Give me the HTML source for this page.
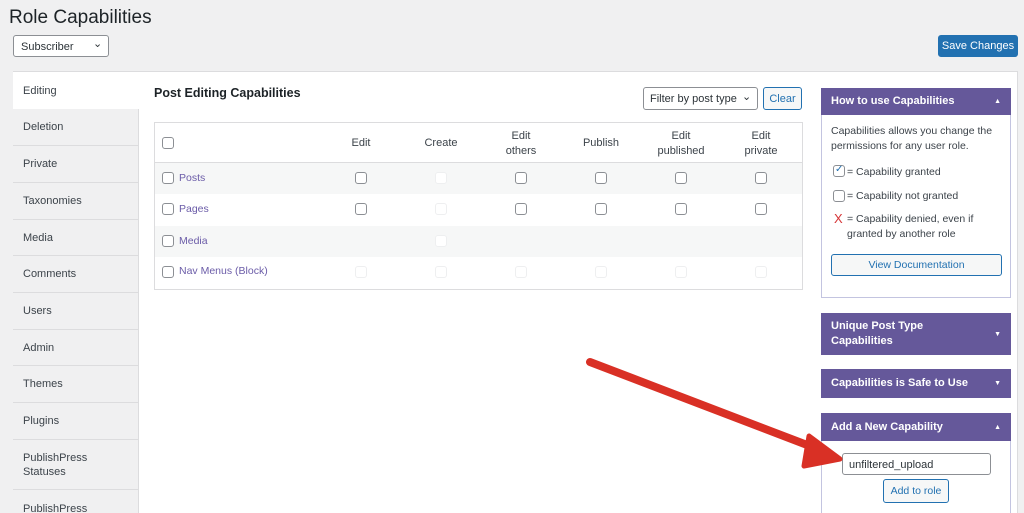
<!DOCTYPE html>
<html><head><meta charset="utf-8"><style>
*{box-sizing:border-box;margin:0;padding:0}
html,body{width:1024px;height:513px;overflow:hidden}
body{background:#f0f0f1;font-family:"Liberation Sans",sans-serif;font-size:11px;color:#3c434a;position:relative}
.a{position:absolute}
.cb{position:absolute;width:12px;height:12px;border:1px solid #8c8f94;border-radius:3px;background:#fff}
.cb.f{border-color:#eeeff0}
.tab{position:absolute;left:13px;width:126px;background:#f0f0f1;border-bottom:1px solid #dcdcde;border-right:1px solid #dcdcde;padding-left:10px;display:flex;align-items:center;font-size:11px;color:#3c434a;line-height:14px}
.th{position:absolute;text-align:center;width:80px;font-size:11px;line-height:15px;color:#3c434a}
.lnk{position:absolute;left:179px;color:#6b5ca8;font-size:10.5px}
.hd{position:absolute;left:821px;width:190px;background:#65589a;color:#fff;font-weight:bold;font-size:11px;padding-left:10px;display:flex;align-items:center;line-height:15px}
.tri{position:absolute;right:10px;font-size:7px}
</style></head><body>
<div class="a" style="left:9px;top:7px;font-size:19px;color:#1d2327">Role Capabilities</div>
<div class="a" style="left:13px;top:35px;width:96px;height:22px;border:1px solid #8c8f94;border-radius:3px;background:#fff;padding:5px 0 0 7px;font-size:11px;color:#2c3338">Subscriber<span class="a" style="left:79px;top:1px;font-size:11px">&#8964;</span></div>
<div class="a" style="left:938px;top:35px;width:80px;height:22px;background:#2271b1;border-radius:3px;color:#fff;font-size:11px;text-align:center;line-height:22px">Save Changes</div>

<div class="a" style="left:13px;top:71px;width:1005px;height:460px;background:#fff;border:1px solid #dcdcde"></div>
<div class="a" style="left:138px;top:108px;width:1px;height:420px;background:#dcdcde"></div>
<div class="tab" style="top:72px;height:37px;background:#fff;border-right:none;border-bottom:none">Editing</div>
<div class="tab" style="top:109px;height:37px">Deletion</div>
<div class="tab" style="top:146px;height:37px">Private</div>
<div class="tab" style="top:183px;height:37px">Taxonomies</div>
<div class="tab" style="top:220px;height:36px">Media</div>
<div class="tab" style="top:256px;height:37px">Comments</div>
<div class="tab" style="top:293px;height:37px">Users</div>
<div class="tab" style="top:330px;height:36px">Admin</div>
<div class="tab" style="top:366px;height:37px">Themes</div>
<div class="tab" style="top:403px;height:37px">Plugins</div>
<div class="tab" style="top:440px;height:50px">PublishPress<br>Statuses</div>
<div class="tab" style="top:490px;height:40px;align-items:flex-start;padding-top:12px">PublishPress</div>

<div class="a" style="left:154px;top:86px;font-size:12.5px;font-weight:bold;color:#1d2327">Post Editing Capabilities</div>
<div class="a" style="left:643px;top:87px;width:115px;height:23px;border:1px solid #8c8f94;border-radius:3px;padding:5px 0 0 6px;font-size:11px;color:#2c3338">Filter by post type<span class="a" style="left:98px;top:2px;font-size:11px">&#8964;</span></div>
<div class="a" style="left:763px;top:87px;width:39px;height:23px;border:1px solid #2271b1;border-radius:3px;background:#f6f7f7;color:#2271b1;font-size:11px;text-align:center;padding-top:5px">Clear</div>

<div class="a" style="left:154px;top:122px;width:649px;height:168px;border:1px solid #dcdcde"></div>
<div class="a" style="left:155px;top:162px;width:647px;height:1px;background:#dcdcde"></div>
<div class="a" style="left:155px;top:163px;width:647px;height:31px;background:#f6f7f7"></div>
<div class="a" style="left:155px;top:226px;width:647px;height:31px;background:#f6f7f7"></div>
<div class="th" style="left:321px;top:136px">Edit</div>
<div class="th" style="left:401px;top:136px">Create</div>
<div class="th" style="left:481px;top:129px">Edit<br>others</div>
<div class="th" style="left:561px;top:136px">Publish</div>
<div class="th" style="left:641px;top:129px">Edit<br>published</div>
<div class="th" style="left:721px;top:129px">Edit<br>private</div>
<div class="cb" style="left:162px;top:137px"></div>
<div class="cb" style="left:162px;top:172px"></div><div class="lnk" style="top:172px">Posts</div>
<div class="cb" style="left:162px;top:203px"></div><div class="lnk" style="top:203px">Pages</div>
<div class="cb" style="left:162px;top:235px"></div><div class="lnk" style="top:235px">Media</div>
<div class="cb" style="left:162px;top:266px"></div><div class="lnk" style="top:265px">Nav Menus (Block)</div>
<div class="cb" style="left:355px;top:172px"></div><div class="cb f" style="left:435px;top:172px"></div><div class="cb" style="left:515px;top:172px"></div><div class="cb" style="left:595px;top:172px"></div><div class="cb" style="left:675px;top:172px"></div><div class="cb" style="left:755px;top:172px"></div>
<div class="cb" style="left:355px;top:203px"></div><div class="cb f" style="left:435px;top:203px"></div><div class="cb" style="left:515px;top:203px"></div><div class="cb" style="left:595px;top:203px"></div><div class="cb" style="left:675px;top:203px"></div><div class="cb" style="left:755px;top:203px"></div>
<div class="cb f" style="left:435px;top:235px"></div>
<div class="cb f" style="left:355px;top:266px"></div><div class="cb f" style="left:435px;top:266px"></div><div class="cb f" style="left:515px;top:266px"></div><div class="cb f" style="left:595px;top:266px"></div><div class="cb f" style="left:675px;top:266px"></div><div class="cb f" style="left:755px;top:266px"></div>

<div class="a" style="left:821px;top:88px;width:190px;height:210px;border:1px solid #c3c4e0;border-top:none"></div>
<div class="hd" style="top:88px;height:27px">How to use Capabilities<span class="tri">&#9650;</span></div>
<div class="a" style="left:831px;top:124px;width:175px;font-size:10.5px;line-height:15px">Capabilities allows you change the permissions for any user role.</div>
<div class="cb" style="left:833px;top:165px"></div><div class="a" style="left:835px;top:164px;color:#2271b1;font-size:10px">&#10003;</div>
<div class="a" style="left:847px;top:166px;font-size:10.5px">= Capability granted</div>
<div class="cb" style="left:833px;top:190px"></div>
<div class="a" style="left:847px;top:190px;font-size:10.5px">= Capability not granted</div>
<div class="a" style="left:834px;top:211px;color:#d63638;font-size:13px">X</div>
<div class="a" style="left:847px;top:212px;font-size:10.5px;line-height:15px;width:150px">= Capability denied, even if granted by another role</div>
<div class="a" style="left:831px;top:254px;width:171px;height:22px;border:1px solid #2271b1;border-radius:3px;background:#f6f7f7;color:#2271b1;text-align:center;line-height:20px;font-size:10.5px">View Documentation</div>

<div class="hd" style="top:313px;height:42px">Unique Post Type<br>Capabilities<span class="tri">&#9660;</span></div>
<div class="hd" style="top:369px;height:29px">Capabilities is Safe to Use<span class="tri">&#9660;</span></div>
<div class="a" style="left:821px;top:413px;width:190px;height:110px;border:1px solid #c3c4e0"></div>
<div class="hd" style="top:413px;height:28px">Add a New Capability<span class="tri">&#9650;</span></div>
<div class="a" style="left:842px;top:453px;width:149px;height:22px;border:1px solid #8c8f94;border-radius:3px;background:#fff;padding:5px 0 0 6px;font-size:11px;color:#2c3338">unfiltered_upload</div>
<div class="a" style="left:883px;top:479px;width:66px;height:24px;border:1px solid #2271b1;border-radius:3px;background:#f6f7f7;color:#2271b1;text-align:center;line-height:22px;font-size:10.5px">Add to role</div>

<svg class="a" style="left:0;top:0" width="1024" height="513">
<line x1="590" y1="362" x2="815" y2="448" stroke="#d93025" stroke-width="8" stroke-linecap="round"/>
<polygon points="840,459 804,466 809,436" fill="#d93025" stroke="#d93025" stroke-width="5" stroke-linejoin="round"/>
</svg>
</body></html>
